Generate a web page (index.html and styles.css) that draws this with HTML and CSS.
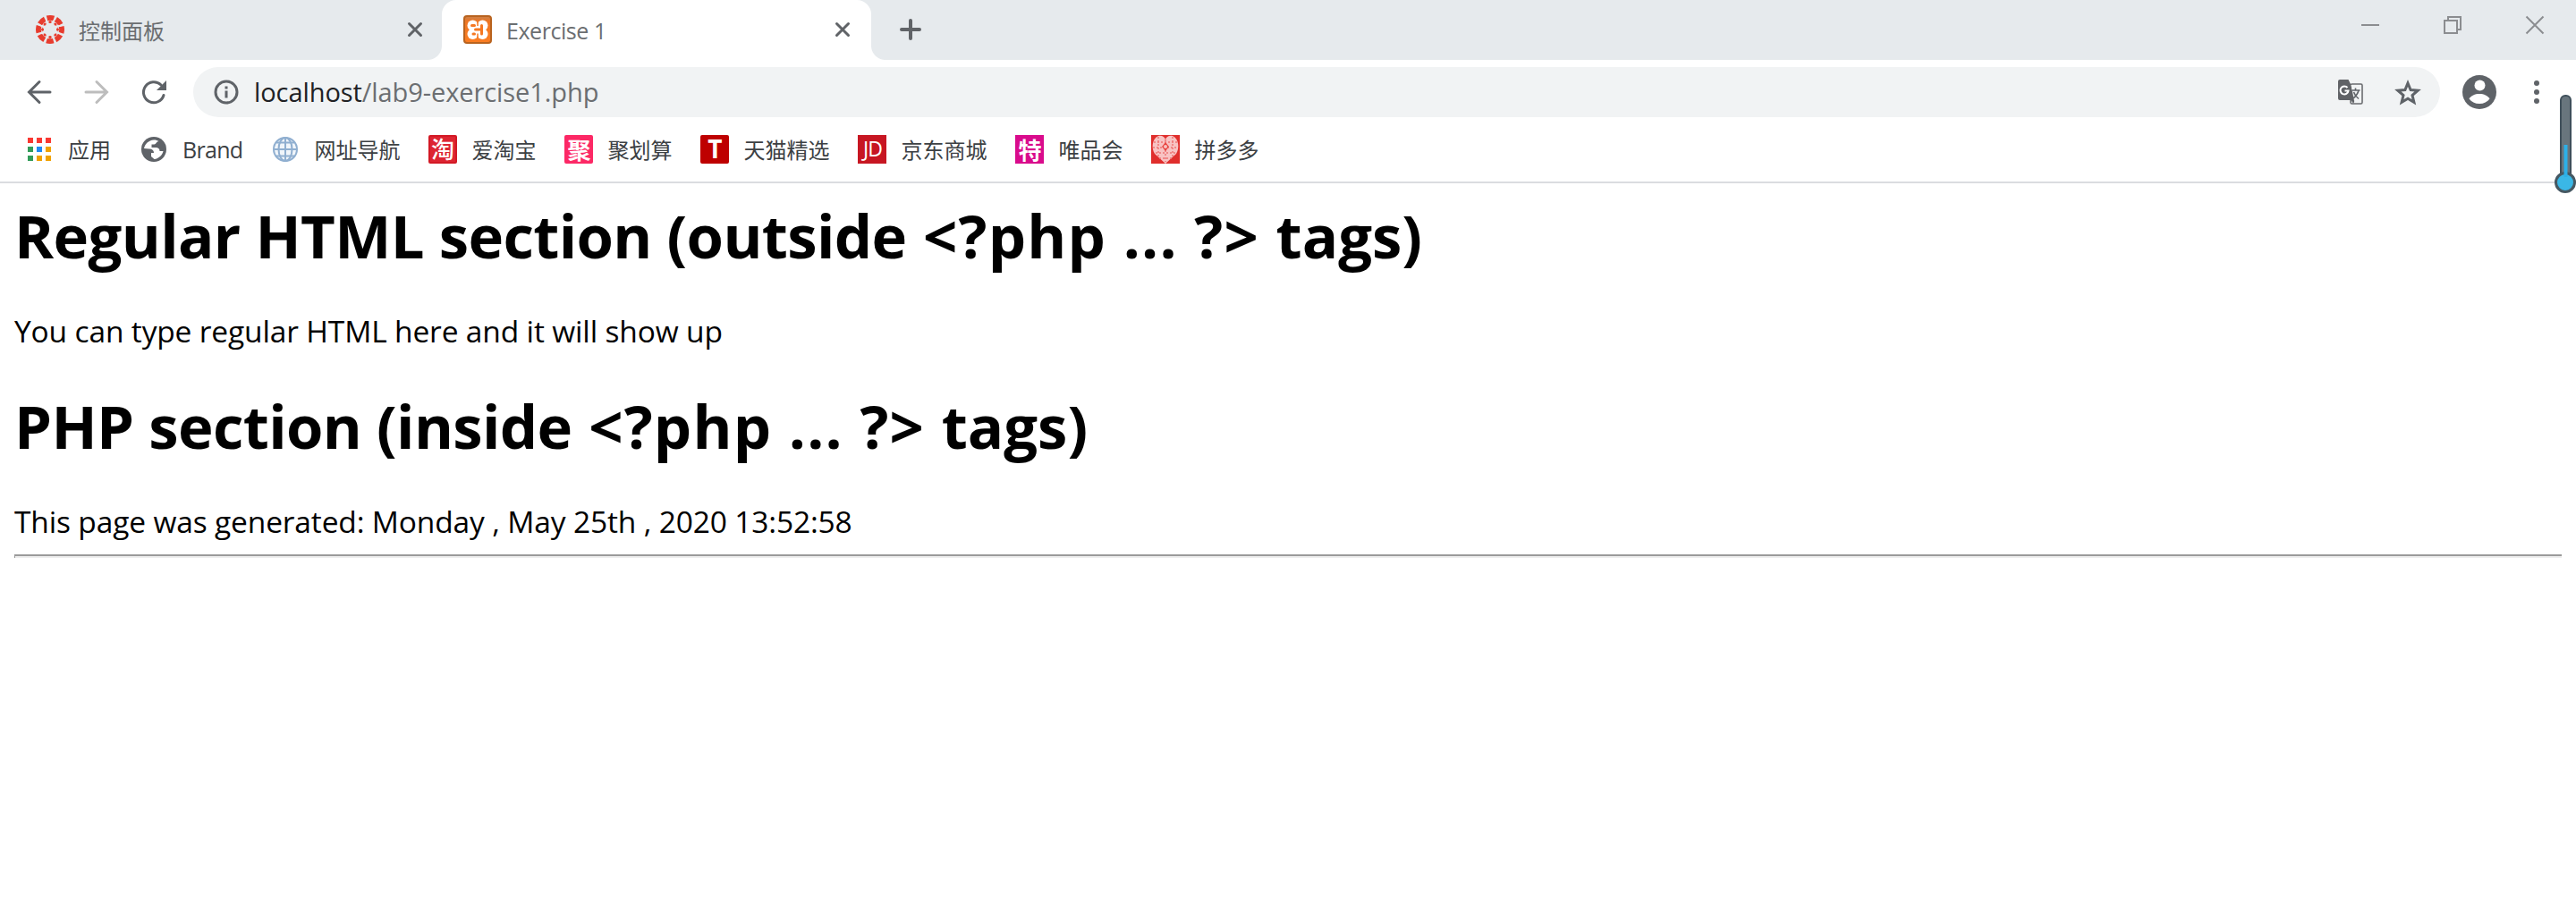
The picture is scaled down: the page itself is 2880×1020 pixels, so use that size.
FILE: index.html
```html
<!DOCTYPE html>
<html lang="zh">
<head>
<meta charset="utf-8">
<title>Exercise 1</title>
<link rel="stylesheet" href="styles.css">
</head>
<body>
<header class="browser">
  <div class="tabstrip">
    <div class="tab tab-first">
      <svg class="ico" viewBox="0 0 32 32"><circle cx="16" cy="16" r="13.500" fill="none" stroke="#e73c2e" stroke-width="5" stroke-dasharray="8 2.603" stroke-dashoffset="4"/><g fill="#e73c2e"><circle cx="16" cy="5.500" r="3"/><circle cx="23.400" cy="8.600" r="3"/><circle cx="26.500" cy="16" r="3"/><circle cx="23.400" cy="23.400" r="3"/><circle cx="16" cy="26.500" r="3"/><circle cx="8.600" cy="23.400" r="3"/><circle cx="5.500" cy="16" r="3"/><circle cx="8.600" cy="8.600" r="3"/></g><circle cx="16" cy="16" r="9.500" fill="none" stroke="#e6eaed" stroke-width="1.500"/><g fill="#e73c2e"><circle cx="16" cy="7.500" r="1.500"/><circle cx="22" cy="10" r="1.500"/><circle cx="24.500" cy="16" r="1.500"/><circle cx="22" cy="22" r="1.500"/><circle cx="16" cy="24.500" r="1.500"/><circle cx="10" cy="22" r="1.500"/><circle cx="7.500" cy="16" r="1.500"/><circle cx="10" cy="10" r="1.500"/></g></svg>
      <span class="tab-title">控制面板</span>
      <svg class="close" viewBox="0 0 16 16"><path d="M1.500 1.500l13 13M14.500 1.500l-13 13"/></svg>
    </div>
    <div class="tab tab-active">
      <svg class="ico" viewBox="0 0 32 32"><defs><linearGradient id="xg" x2="0" y2="1"><stop offset="0" stop-color="#c9824e"/><stop offset=".2" stop-color="#ee7623"/><stop offset="1" stop-color="#fb7d22"/></linearGradient></defs><rect x="1" y="1" width="30" height="30" rx="3" fill="url(#xg)" stroke="#b8631f" stroke-width="2"/><g fill="#fff"><circle cx="10.500" cy="11.500" r="6"/><circle cx="21.500" cy="11.500" r="6"/><circle cx="10.500" cy="21" r="6"/><circle cx="21.500" cy="21" r="6"/><path d="M10 11h12v10H10z"/></g><path d="M9.500 11.500h3M13.500 16h6M20.500 11.500V21M11 21h1.500" fill="none" stroke="#f57822" stroke-width="3" stroke-linecap="round"/><path d="M16 7v5M16 20.500v5" stroke="#f57822" stroke-width="1.500"/></svg>
      <span class="tab-title latin exercise">Exercise 1</span>
      <svg class="close" viewBox="0 0 16 16"><path d="M1.500 1.500l13 13M14.500 1.500l-13 13"/></svg>
    </div>
    <svg class="plus" viewBox="0 0 24 24"><path d="M12 2v20M2 12h20"/></svg>
    <div class="window-controls">
      <svg viewBox="0 0 20 20"><path d="M0 10h20"/></svg>
      <svg viewBox="0 0 20 20"><path d="M1 5h14v14H1zM5 5V1h14v14h-4"/></svg>
      <svg viewBox="0 0 20 20"><path d="M.5 .5l19 19M19.500 .5l-19 19"/></svg>
    </div>
  </div>
  <div class="toolbar">
    <svg class="nav" viewBox="0 0 28 28"><path d="M26 14H3M14 2.500L2.500 14L14 25.500"/></svg>
    <svg class="nav forward" viewBox="0 0 28 28"><path d="M2 14h23M14 2.500L25.500 14L14 25.500"/></svg>
    <svg class="nav" viewBox="0 0 28 28"><path d="M25 17.500A11.500 11.500 0 1 1 22 6"/><path class="solid" d="M28 1v11H17z"/></svg>
    <div class="omnibox">
      <svg class="info" viewBox="0 0 28 28"><circle cx="14" cy="14" r="12"/><path d="M14 12.500v8M14 7.500v3"/></svg>
      <span class="url latin"><span class="host">localhost</span>/lab9-exercise1.php</span>
      <svg class="translate" viewBox="0 0 28 28"><rect x="14" y="5" width="13" height="22" rx="1.500" fill="none" stroke="#6a6c6f" stroke-width="1.600"/><path d="M2 0h9.500l2.500 5 5 18-2 4-2.500-4H2a2 2 0 0 1-2-2V2a2 2 0 0 1 2-2z" fill="#606266"/><path d="M14.500 6H26v20h-7.500z" fill="#f1f3f4"/><path d="M10.500 9A4.500 4.500 0 1 0 11.500 12.500H7.500" fill="none" stroke="#fff" stroke-width="2"/><path d="M15.500 12h9M19.500 9.500V12M23 12c-1 4-3 6.500-6 9M17.500 14c1 3 3 5.500 5.500 7.500" fill="none" stroke="#5f6368" stroke-width="1.600"/></svg>
      <svg class="star" viewBox="0 0 30 29"><path d="M15 4l3.100 7.500 8.100.700-6.200 5.300 1.900 7.900-6.900-4.200-6.900 4.200 1.900-7.900-6.200-5.300 8.100-.700z"/></svg>
    </div>
    <svg class="account" viewBox="0 0 38 38"><circle cx="19" cy="19" r="19" fill="#5f6368"/><circle cx="19.500" cy="11.500" r="6" fill="#fff"/><path d="M7.500 26.500c2-3.500 6.500-5.500 11.500-5.500s9.500 2 11.500 5.500C28 30 24 32 19 32s-9-2-11.500-5.500z" fill="#fff"/></svg>
    <svg class="menu" viewBox="0 0 6 26"><circle cx="3" cy="3" r="3"/><circle cx="3" cy="13" r="3"/><circle cx="3" cy="23" r="3"/></svg>
  </div>
  <nav class="bookmarks">
    <a class="bm"><svg class="ico" viewBox="0 0 32 32"><path fill="#f93832" d="M3 3h6v6H3zM13 3h6v6h-6zM23 3h6v6h-6z"/><path fill="#329c59" d="M3 13h6v6H3zM3 23h6v6H3z"/><path fill="#1e8af5" d="M13 13h6v6h-6z"/><path fill="#f0a202" d="M23 13h6v6h-6zM13 23h6v6h-6zM23 23h6v6h-6z"/></svg><span>应用</span></a>
    <a class="bm"><svg class="ico" viewBox="0 0 32 32"><circle cx="16" cy="16" r="14" fill="#5f6368"/><path d="M16 5.500C10 6 6 10 5 15l6 .500c3 0 5 1.500 5 4.500h-3v4l3.500 3c5-.500 9-4.500 10-9h-4c0-3-2-4-4-4h-5v-3.500h3c2 0 2-3 5-3.500-1.500-1-3.500-1.600-5.500-1.500z" fill="#fff"/></svg><span class="latin brand">Brand</span></a>
    <a class="bm"><svg class="ico" viewBox="0 0 32 32"><circle cx="16" cy="16" r="13" fill="#f0f5fa"/><g fill="none" stroke="#90afd0" stroke-width="2"><circle cx="16" cy="16" r="13"/><ellipse cx="16" cy="16" rx="7.500" ry="13"/><path d="M16 3v26M3 16h26M6 8.500h20M6 23.500h20"/></g></svg><span>网址导航</span></a>
    <a class="bm"><span class="badge tao">淘</span><span>爱淘宝</span></a>
    <a class="bm"><span class="badge ju">聚</span><span>聚划算</span></a>
    <a class="bm"><span class="badge tmall">T</span><span>天猫精选</span></a>
    <a class="bm"><span class="badge jd">JD</span><span>京东商城</span></a>
    <a class="bm"><span class="badge vip">特</span><span>唯品会</span></a>
    <a class="bm"><svg class="ico" viewBox="0 0 32 32"><rect width="32" height="32" fill="#e02e2c"/><path d="M16 32L4 21C0 15 1 4 8 1c4-1 7 1 8 4 1-3 4-5 8-4 7 3 8 14 4 20z" fill="#f8c3c3"/><path d="M3 8h26M2 14h28M5 20h22M9 26h14M8 2v22M16 5v25M24 2v22" stroke="#ed7776" stroke-width="1.500" stroke-dasharray="2 2"/><path d="M16 8l4 5-4 5-4-5z" fill="#e8443f"/><circle cx="16" cy="13" r="2" fill="#f8c3c3"/></svg><span>拼多多</span></a>
  </nav>
  <svg class="thermo" viewBox="0 0 26 112"><rect x="8" y="1" width="11" height="92" rx="5" fill="#68757d" stroke="#40505b" stroke-width="2"/><circle cx="13" cy="98" r="10.500" fill="#3ab7e6" stroke="#465862" stroke-width="3"/><path d="M11.500 56h4v36h-4z" fill="#2cb0e8"/></svg>
</header>
<main class="page latin">
  <h1 class="h-first">Regular HTML section (outside<span class="code"> &lt;?php ... ?&gt; </span><span class="last">tags)</span></h1>
  <p>You can type regular HTML here and it will show up</p>
  <h1 class="h-second">PHP section (inside<span class="code"> &lt;?php ... ?&gt; </span><span class="last">tags)</span></h1>
  <p>This page was generated: Monday , May 25th , 2020 13:52:58</p>
  <hr>
</main>
</body>
</html>
```
FILE: styles.css
```css
* { box-sizing: border-box; }
body { margin: 0; height: 1020px; background: #fff; overflow: hidden; font-family: "Noto Sans CJK SC", sans-serif; }
svg { display: block; flex: none; overflow: visible; }
.latin { font-family: "Open Sans", "Noto Sans CJK SC", sans-serif; }
.browser { position: relative; height: 205px; border-bottom: 2px solid #dadce0; }

.tabstrip { display: flex; align-items: flex-start; height: 67px; background: #e6eaed; color: #6b6e71; }
.tab { display: flex; align-items: center; height: 67px; gap: 16px; }
.tab-first { width: 494px; padding: 0 22px 1px 40px; }
.tab-active { position: relative; width: 480px; padding: 0 24px 1px; background: #fff; border-radius: 16px 16px 0 0; }
.tab-active::before, .tab-active::after { content: ""; position: absolute; bottom: 0; width: 16px; height: 16px; }
.tab-active::before { left: -16px; background: radial-gradient(circle at 0 0, transparent 15.5px, #fff 16.5px); }
.tab-active::after { right: -16px; background: radial-gradient(circle at 100% 0, transparent 15.5px, #fff 16.5px); }
.ico { width: 32px; height: 32px; }
.tab-title { flex: 1; font-size: 24px; line-height: 32px; white-space: nowrap; padding-top: 2px; }
.exercise { font-size: 25px; letter-spacing: -.45px; padding-top: 1px; }
.close { width: 16px; height: 16px; fill: none; stroke: #606367; stroke-width: 3; stroke-linecap: round; }
.plus { width: 24px; height: 24px; margin: 21px 0 0 32px; fill: none; stroke: #606367; stroke-width: 4; stroke-linecap: round; }
.window-controls { display: flex; gap: 72px; margin: 18px 36px 0 auto; }
.window-controls svg { width: 20px; height: 20px; fill: none; stroke: #8b8d90; stroke-width: 2; }

.toolbar { display: flex; align-items: center; height: 72px; padding: 0 41px 0 30px; }
.nav { width: 28px; height: 28px; margin-right: 36px; fill: none; stroke: #5f6368; stroke-width: 3; stroke-linecap: round; }
.forward { stroke: #bdbdbd; }
.solid { fill: #5f6368; stroke: none; }
.omnibox { flex: 1; display: flex; align-items: center; height: 56px; padding: 0 21px 0 23px; margin-left: -6px; background: #f1f3f4; border-radius: 28px; }
.info { width: 28px; height: 28px; fill: none; stroke: #5f6368; stroke-width: 3; }
.url { flex: 1; margin: 0 0 1px 17px; font-size: 29px; line-height: 40px; letter-spacing: -.08px; color: #6b6e71; white-space: nowrap; }
.host { color: #202124; }
.translate { width: 28px; height: 28px; margin-right: 35px; }
.star { width: 30px; height: 29px; fill: none; stroke: #5f6368; stroke-width: 3; }
.account { width: 38px; height: 38px; margin-left: 25px; }
.menu { width: 6px; height: 26px; margin-left: 42px; fill: #5f6368; }

.bookmarks { display: flex; align-items: center; gap: 32px; height: 56px; padding-left: 28px; color: #3c4043; }
.bm { display: flex; align-items: center; gap: 16px; font-size: 24px; line-height: 32px; white-space: nowrap; }
.brand { font-size: 25px; letter-spacing: -.7px; }
.badge { width: 32px; height: 32px; border-radius: 2px; color: #fff; font-size: 26px; line-height: 31px; font-weight: 700; text-align: center; }
.tao { background: #dd2532; border: 2px solid #d31925; line-height: 26px; font-weight: 500; text-indent: -1px; }
.ju { background: #fc2865; }
.tmall { background: #be0000; font-family: "Open Sans", sans-serif; font-size: 28px; }
.jd { background: #c71622; border-radius: 0; font-family: "Open Sans", sans-serif; font-size: 23px; font-weight: 400; letter-spacing: -1px; }
.vip { background: #d90b8c; border-radius: 0; }
.thermo { position: absolute; right: -1px; top: 106px; width: 26px; height: 112px; }

.page { padding: 0 16px; color: #000; white-space: nowrap; }
h1 { margin: 0; font-size: 67px; line-height: 90px; font-weight: 700; letter-spacing: -.63px; }
.code { letter-spacing: 1.2px; }
.last { letter-spacing: 0; }
p { margin: 0; padding-top: 40px; font-size: 33.5px; line-height: 44px; letter-spacing: -.15px; }
.h-first { padding-top: 13px; }
.h-second { padding-top: 39px; }
hr { height: 4px; margin: 15px 0 0; border: 0; border-top: 2px solid #9a9a9a; border-left: 1px solid #9a9a9a; background: #eee; }
```
